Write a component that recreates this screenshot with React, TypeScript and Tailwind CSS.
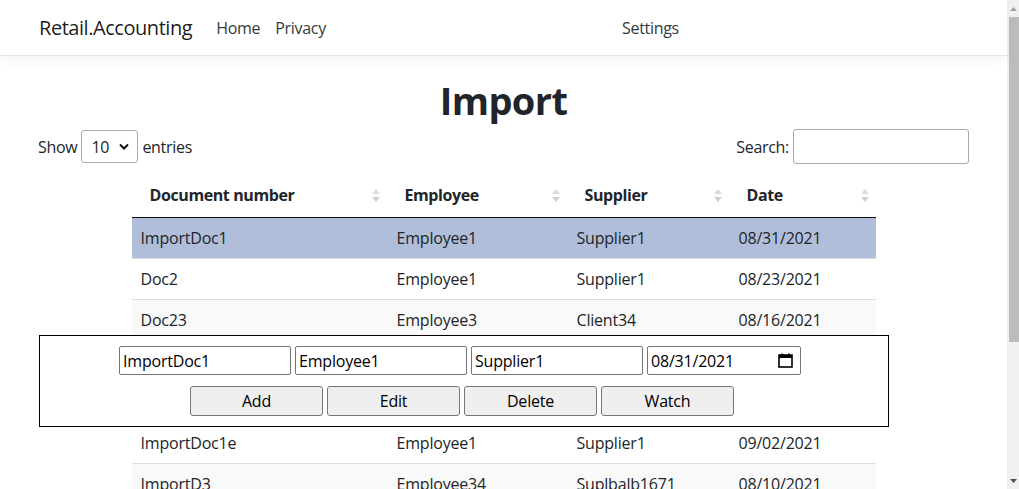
// Import page (Retail.Accounting)

const rows = [
  { doc: "ImportDoc1", emp: "Employee1", sup: "Supplier1", date: "08/31/2021", selected: true },
  { doc: "Doc2", emp: "Employee1", sup: "Supplier1", date: "08/23/2021" },
  { doc: "Doc23", emp: "Employee3", sup: "Client34", date: "08/16/2021" },
  // these two rows sit under the edit panel
  { doc: "", emp: "", sup: "", date: "" },
  { doc: "", emp: "", sup: "", date: "" },
  { doc: "ImportDoc1e", emp: "Employee1", sup: "Supplier1", date: "09/02/2021" },
  { doc: "ImportD3", emp: "Employee34", sup: "Suplbalb1671", date: "08/10/2021" },
];

const cols = [
  { label: "Document number", w: "w-[255px]" },
  { label: "Employee", w: "w-[180px]" },
  { label: "Supplier", w: "w-[162px]" },
  { label: "Date", w: "w-[147px]" },
];

export default function App() {
  return (
    <div className="flex h-[489px] w-full overflow-hidden bg-white font-['Open_Sans','Noto_Sans',sans-serif] text-[16px] text-[#212529]">
      <div className="relative min-w-0 flex-1">
        {/* Top navbar */}
        <nav className="flex h-[56px] items-center border-b border-[#e5e5e5] bg-white pl-[39px] shadow-[0_4px_12px_rgba(0,0,0,0.05)]">
          <div className="flex w-[583px] items-center">
            <span className="text-[20px] tracking-[-0.45px] text-black/90">Retail.Accounting</span>
            <span className="ml-[24px] tracking-[-0.3px] text-[#343a40]">Home</span>
            <span className="ml-[15px] tracking-[-0.3px] text-[#343a40]">Privacy</span>
          </div>
          <span className="tracking-[-0.3px] text-[#343a40]">Settings</span>
        </nav>

        <main className="px-[38px]">
          <h1 className="mt-[20px] text-center text-[38px] font-bold leading-[48px] tracking-[-0.6px]">Import</h1>

          {/* length + search */}
          <div className="mt-[5px] flex h-[35px] items-center justify-between">
            <div className="flex items-center gap-[4px] tracking-[-0.3px]">
              <span>Show</span>
              <div className="flex h-[33px] w-[57px] items-center justify-between rounded-[3px] border border-[#aaa] pl-[9px] pr-[8px]">
                <span>10</span>
                <svg width="10" height="7" viewBox="0 0 10 7">
                  <path d="M1 1.5 L5 5.5 L9 1.5" fill="none" stroke="#111" strokeWidth="2" />
                </svg>
              </div>
              <span>entries</span>
            </div>
            <label className="flex items-center gap-[4px] tracking-[-0.3px]">
              <span>Search:</span>
              <input className="h-[35px] w-[176px] rounded-[3px] border border-[#aaa] px-[4px] outline-none" />
            </label>
          </div>

          {/* data table */}
          <div className="mx-auto mt-[9px] w-[744px]">
            <div className="flex h-[45px] border-b border-[#111]">
              {cols.map((c) => (
                <div key={c.label} className={`${c.w} flex items-center justify-between pl-[18px] pr-[7px] font-bold tracking-[-0.4px]`}>
                  <span>{c.label}</span>
                  <SortIcon />
                </div>
              ))}
            </div>
            {rows.map((r, i) => (
              <div
                key={i}
                className={`flex ${i === 0 ? "h-[40px]" : "h-[41px] border-t border-[#ddd]"} ${
                  r.selected ? "bg-[#b0bed9]" : i % 2 === 0 ? "bg-[#f9f9f9]" : "bg-white"
                } items-center tracking-[-0.2px]`}
              >
                <div className="w-[255px] pl-[9px]">{r.doc}</div>
                <div className="w-[180px] pl-[10px]">{r.emp}</div>
                <div className="w-[162px] pl-[10px]">{r.sup}</div>
                <div className="w-[147px] pl-[10px]">{r.date}</div>
              </div>
            ))}
          </div>
        </main>

        {/* edit panel over the table */}
        <div className="absolute left-[39px] top-[335px] flex h-[92px] w-[850px] flex-col items-center border border-black bg-white pt-[10px]">
          <div className="flex gap-[4px] pr-[8px]">
            <Field value="ImportDoc1" />
            <Field value="Employee1" />
            <Field value="Supplier1" />
            <div className="flex h-[29px] w-[154px] items-center justify-between rounded-[2px] border border-[#767676] pl-[3px] pr-[7px] tracking-[-0.2px] text-black">
              <span>08/31/2021</span>
              <svg width="15" height="15" viewBox="0 0 15 15">
                <rect x="1" y="2" width="13" height="12" fill="none" stroke="#000" strokeWidth="1.6" />
                <rect x="1" y="2" width="13" height="3" fill="#000" />
                <rect x="3.5" y="0.5" width="1.6" height="2.5" fill="#000" />
                <rect x="10" y="0.5" width="1.6" height="2.5" fill="#000" />
              </svg>
            </div>
          </div>
          <div className="mt-[11px] flex gap-[4px] pr-[4px]">
            {["Add", "Edit", "Delete", "Watch"].map((b) => (
              <button key={b} className="h-[30px] w-[133px] rounded-[3px] border border-[#767676] bg-[#efefef] tracking-[-0.2px] text-black">
                {b}
              </button>
            ))}
          </div>
        </div>
      </div>

      {/* fake scrollbar */}
      <div className="flex w-[12px] flex-col items-end bg-[#f1f1f1]">
        <div className="flex h-[17px] w-full items-center justify-center">
          <svg width="7" height="4" viewBox="0 0 7 4">
            <path d="M0 4 L3.5 0 L7 4 Z" fill="#a3a3a3" />
          </svg>
        </div>
        <div className="h-[325px] w-[10px] bg-[#bcbcbc]" />
        <div className="flex-1" />
        <div className="flex h-[17px] w-full items-center justify-center">
          <svg width="7" height="4" viewBox="0 0 7 4">
            <path d="M0 0 L7 0 L3.5 4 Z" fill="#505050" />
          </svg>
        </div>
      </div>
    </div>
  );
}

function Field({ value }: { value: string }) {
  return (
    <input
      readOnly
      value={value}
      className="h-[29px] w-[172px] rounded-[2px] border border-[#767676] px-[3px] tracking-[-0.2px] text-black outline-none"
    />
  );
}

function SortIcon() {
  return (
    <svg width="8" height="13" viewBox="0 0 8 13">
      <path d="M4 0 L8 5 L0 5 Z" fill="#dcdcdc" />
      <path d="M0 8 L8 8 L4 13 Z" fill="#d0d0d0" />
    </svg>
  );
}
